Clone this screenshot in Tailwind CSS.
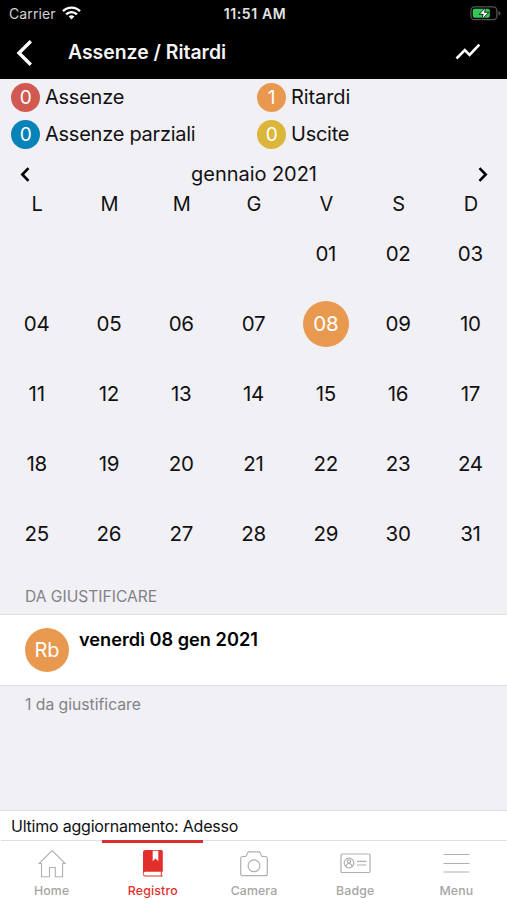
<!DOCTYPE html>
<html lang="it">
<head>
  <meta charset="UTF-8" />
  <meta name="viewport" content="width=device-width, initial-scale=1.0"/>
  <title>Assenze / Ritardi</title>
  <script src="https://cdn.jsdelivr.net/npm/@tailwindcss/browser@4"></script>
  <style>
    body {
      font-family: Inter, 'Liberation Sans', sans-serif;
    }
  </style>
</head>
<body class="bg-[#f1f0f5] text-[#111113]">
  <div class="w-[507px] h-[900px] flex flex-col overflow-hidden">

    <!-- Status bar -->
    <div class="h-[27px] shrink-0 bg-black text-white grid grid-cols-3 items-center pl-[9px] pr-[6px] text-[14px]">
      <div class="flex items-center gap-[6px] text-[#d2d2d2]">
        <span class="tracking-[0.1px]">Carrier</span>
        <svg class="-mt-[2px]" width="19" height="14" viewBox="0 0 19 14" fill="none" stroke="#fff" stroke-width="2.4">
          <path d="M1 5.2a12 12 0 0 1 17 0"/>
          <path d="M4.1 8.3a7.7 7.7 0 0 1 10.8 0"/>
          <path d="M9.5 13.5l-2.8-2.9a4 4 0 0 1 5.6 0z" fill="#fff" stroke="none"/>
        </svg>
      </div>
      <div class="text-center font-semibold text-[14px] tracking-[0.6px] text-[#e4e4e4]">11:51 AM</div>
      <div class="flex justify-end">
        <svg width="31" height="15" viewBox="0 0 31 15" fill="none">
          <rect x="0.9" y="0.9" width="26" height="12.8" rx="3.8" stroke="#555" stroke-width="1.3"/>
          <path d="M28.5 5v4.6c1.6-.5 2-1.4 2-2.3s-.4-1.8-2-2.3z" fill="#555"/>
          <rect x="2.8" y="2.8" width="17" height="9" rx="1.8" fill="#34c759"/>
          <path d="M15.8 1.3L9.2 8.3h4l-1.6 5.4 7.2-7.4h-4.3z" fill="#fff" stroke="#000" stroke-width="0.8"/>
        </svg>
      </div>
    </div>

    <!-- Header -->
    <div class="h-[52px] shrink-0 bg-black text-[#f4f4f4] flex items-center pl-[16px] pr-[26px]">
      <svg class="-mt-px" width="17" height="26" viewBox="0 0 17 26" fill="none" stroke="#fff" stroke-width="3.4">
        <path d="M14.8 1.3L3 13l11.8 11.7"/>
      </svg>
      <h1 class="ml-[35px] text-[19.4px] font-semibold">Assenze / Ritardi</h1>
      <svg class="ml-auto -mt-[2px]" width="26" height="18" viewBox="0 0 26 18" fill="none" stroke="#fff" stroke-width="2.6">
        <path d="M1.5 15.5l8.3-8.3 4.8 4.8L24.3 1.7"/>
      </svg>
    </div>

    <!-- Legend -->
    <div class="grid grid-cols-[246px_1fr] gap-y-[7px] pl-[11px] pt-[3px] text-[20px] leading-[29px] tracking-[-0.25px]">
      <div class="flex items-center gap-[5px]">
        <span class="size-[29px] rounded-full bg-[#d05a52] text-white text-center text-[19px]">0</span>
        <span class="pt-px">Assenze</span>
      </div>
      <div class="flex items-center gap-[5px]">
        <span class="size-[29px] rounded-full bg-[#e9994f] text-white text-center text-[19px]">1</span>
        <span class="pt-px tracking-[-0.1px]">Ritardi</span>
      </div>
      <div class="flex items-center gap-[5px]">
        <span class="size-[29px] rounded-full bg-[#0783b9] text-white text-center text-[19px]">0</span>
        <span class="pt-px">Assenze parziali</span>
      </div>
      <div class="flex items-center gap-[5px]">
        <span class="size-[29px] rounded-full bg-[#dbb63a] text-white text-center text-[19px]">0</span>
        <span class="pt-px">Uscite</span>
      </div>
    </div>

    <!-- Month switcher -->
    <div class="flex items-center justify-between pl-[20px] pr-[19px] mt-[10px] h-[30px]">
      <svg width="10" height="15" viewBox="0 0 10 15" fill="none" stroke="#000" stroke-width="2.6">
        <path d="M8.5 1.2L2.3 7.5l6.2 6.3"/>
      </svg>
      <span class="text-[20px] tracking-[-0.05px]">gennaio 2021</span>
      <svg width="10" height="15" viewBox="0 0 10 15" fill="none" stroke="#000" stroke-width="2.6">
        <path d="M1.5 1.2l6.2 6.3-6.2 6.3"/>
      </svg>
    </div>

    <!-- Calendar -->
    <div class="grid grid-cols-7 pl-px h-[30px] pb-[5px] items-center text-center text-[20px]">
      <span>L</span><span>M</span><span>M</span><span>G</span><span>V</span><span>S</span><span>D</span>
    </div>
    <div class="grid grid-cols-7 auto-rows-[70px] px-[0.5px] place-items-center text-[20.5px] tracking-[-0.3px]">
      <span class="col-start-5">01</span><span>02</span><span>03</span>
      <span>04</span><span>05</span><span>06</span><span>07</span>
      <span class="size-[46px] rounded-full bg-[#e9994f] text-white text-center leading-[46px]">08</span>
      <span>09</span><span>10</span>
      <span>11</span><span>12</span><span>13</span><span>14</span><span>15</span><span>16</span><span>17</span>
      <span>18</span><span>19</span><span>20</span><span>21</span><span>22</span><span>23</span><span>24</span>
      <span>25</span><span>26</span><span>27</span><span>28</span><span>29</span><span>30</span><span>31</span>
    </div>

    <!-- To justify -->
    <div class="h-[45px] shrink-0 pl-[25px] pt-[16px] text-[15.6px] leading-[24px] text-[#828287]">DA GIUSTIFICARE</div>
    <div class="h-[72px] shrink-0 bg-white border-y border-[#dfdfe3] flex pl-[25px] pt-[13px] gap-[10px]">
      <span class="size-[44px] rounded-full bg-[#e9994f] text-white text-center text-[20px] leading-[44px]">Rb</span>
      <span class="text-[18.2px] leading-[22px] font-semibold text-black">venerdì 08 gen 2021</span>
    </div>
    <div class="pl-[25px] pt-[7px] text-[15.7px] leading-[24px] text-[#828287]">1 da giustificare</div>

    <!-- Last update -->
    <div class="mt-auto h-[30px] shrink-0 bg-white border-t border-[#dfdfe3] pl-[11px] text-[16px] leading-[30px] tracking-[-0.22px]">Ultimo aggiornamento: Adesso</div>

    <!-- Tab bar -->
    <div class="grid grid-cols-5 h-[60px] shrink-0 bg-white pl-px text-[12.3px] font-medium tracking-[0.15px] text-[#a5a5a5]">
      <div class="flex flex-col items-center border-t border-[#dfdfe3] pt-[8px]">
        <svg width="28" height="29" viewBox="0 0 28 29" fill="none" stroke="#b0b0b0" stroke-width="1.1">
          <path d="M3.5 14.5H1L14.2 1.5l13 13h-2.6v13.2h-7.3v-9.2h-5.8v9.2h-8z"/>
        </svg>
        <span class="mt-[5px] leading-[16px]">Home</span>
      </div>
      <div class="flex flex-col items-center border-t-[3px] border-[#d9302f] pt-[6px] text-[#e22f2c]">
        <svg width="22" height="29" viewBox="0 0 22 29">
          <path d="M3.5 1h15.8a1.5 1.5 0 0 1 1.5 1.5v20.2H3.4a1.8 1.8 0 0 0 0 3.7h17.4v1.1H3.5A2.5 2.5 0 0 1 1 25V3.5A2.5 2.5 0 0 1 3.5 1z" fill="#e22f2c"/>
          <path d="M19.3 22.5v4.5" stroke="#e22f2c"/>
          <path d="M10.7 1.8h5.6v10.4l-2.8-2.6-2.8 2.6z" fill="#fff"/>
        </svg>
        <span class="mt-[5px] leading-[16px] tracking-[0.2px]">Registro</span>
      </div>
      <div class="flex flex-col items-center border-t border-[#dfdfe3] pt-[8px]">
        <svg width="28" height="29" viewBox="0 0 28 29" fill="none" stroke="#b0b0b0" stroke-width="1.2">
          <path d="M2.5 7.5h3.3l2.5-4.700h11.200l2.500 4.700h3.300a2 2 0 0 1 2 2v15.200a2 2 0 0 1-2 2H2.700a2 2 0 0 1-2-2V9.500a2 2 0 0 1 1.800-2z"/>
          <circle cx="14" cy="16.8" r="5.9"/>
        </svg>
        <span class="mt-[5px] leading-[16px]">Camera</span>
      </div>
      <div class="flex flex-col items-center border-t border-[#dfdfe3] pt-[8px]">
        <svg width="31" height="29" viewBox="0 0 31 29" fill="none" stroke="#b0b0b0" stroke-width="1.2">
          <rect x="1" y="5" width="29" height="18.5" rx="1"/>
          <circle cx="9" cy="14" r="4.8"/>
          <circle cx="9" cy="12.5" r="1.7"/>
          <path d="M6 17.500c.5-4 5.500-4 6 0M17 12.300h9.500M17 16h9.500"/>
        </svg>
        <span class="mt-[5px] leading-[16px]">Badge</span>
      </div>
      <div class="flex flex-col items-center border-t border-[#dfdfe3] pt-[8px]">
        <svg width="27" height="29" viewBox="0 0 27 29" fill="none" stroke="#b0b0b0" stroke-width="1.2">
          <path d="M.5 5.500h26M.5 14.500h26M.5 23h26"/>
        </svg>
        <span class="mt-[5px] leading-[16px]">Menu</span>
      </div>
    </div>
  </div>
</body>
</html>
